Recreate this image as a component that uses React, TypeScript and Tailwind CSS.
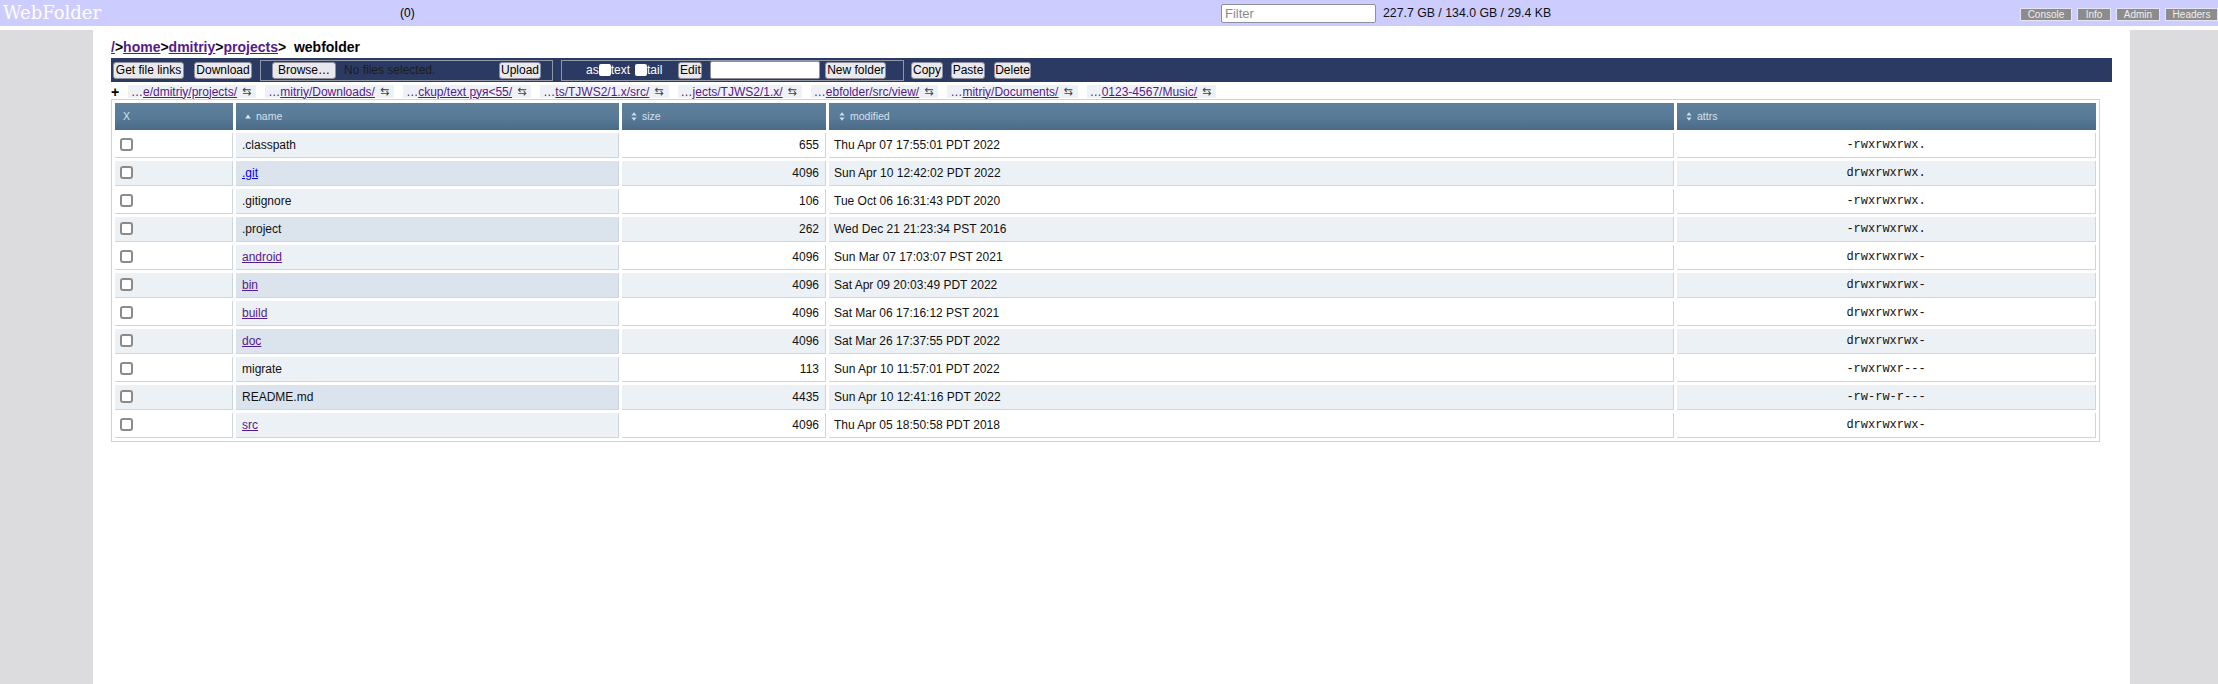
import React from "react";

type Row = { name: string; link?: string; size: string; modified: string; attrs: string };

const rows: Row[] = [
  { name: ".classpath", size: "655", modified: "Thu Apr 07 17:55:01 PDT 2022", attrs: "-rwxrwxrwx." },
  { name: ".git", link: "text-[#0000ee]", size: "4096", modified: "Sun Apr 10 12:42:02 PDT 2022", attrs: "drwxrwxrwx." },
  { name: ".gitignore", size: "106", modified: "Tue Oct 06 16:31:43 PDT 2020", attrs: "-rwxrwxrwx." },
  { name: ".project", size: "262", modified: "Wed Dec 21 21:23:34 PST 2016", attrs: "-rwxrwxrwx." },
  { name: "android", link: "text-[#551a8b]", size: "4096", modified: "Sun Mar 07 17:03:07 PST 2021", attrs: "drwxrwxrwx-" },
  { name: "bin", link: "text-[#551a8b]", size: "4096", modified: "Sat Apr 09 20:03:49 PDT 2022", attrs: "drwxrwxrwx-" },
  { name: "build", link: "text-[#551a8b]", size: "4096", modified: "Sat Mar 06 17:16:12 PST 2021", attrs: "drwxrwxrwx-" },
  { name: "doc", link: "text-[#551a8b]", size: "4096", modified: "Sat Mar 26 17:37:55 PDT 2022", attrs: "drwxrwxrwx-" },
  { name: "migrate", size: "113", modified: "Sun Apr 10 11:57:01 PDT 2022", attrs: "-rwxrwxr---" },
  { name: "README.md", size: "4435", modified: "Sun Apr 10 12:41:16 PDT 2022", attrs: "-rw-rw-r---" },
  { name: "src", link: "text-[#551a8b]", size: "4096", modified: "Thu Apr 05 18:50:58 PDT 2018", attrs: "drwxrwxrwx-" },
];

const recent = [
  "e/dmitriy/projects/",
  "mitriy/Downloads/",
  "ckup/text руя<55/",
  "ts/TJWS2/1.x/src/",
  "jects/TJWS2/1.x/",
  "ebfolder/src/view/",
  "mitriy/Documents/",
  "0123-4567/Music/",
];

const Btn = ({ label, w }: { label: string; w: string }) => (
  <button className={`${w} h-[17px] flex items-center justify-center bg-[#e9e9ed] border border-[#8f8f9d] rounded-[3px] text-[12px] leading-none text-black`}>
    {label}
  </button>
);

const TopBtn = ({ label, w }: { label: string; w: string }) => (
  <div className={`${w} h-[13px] flex items-center justify-center bg-[#8c8c8c] border border-[#e4e4f4] text-[10px] leading-none text-[#eeeeee]`}>
    {label}
  </div>
);

const SortUp = () => (
  <svg width="6" height="5" viewBox="0 0 6 5">
    <path d="M3 0.5L5.8 4.5H0.2Z" fill="#dfe7ef" />
  </svg>
);

const SortBoth = () => (
  <svg width="6" height="9" viewBox="0 0 6 9">
    <path d="M3 0.3L5.6 3.6H0.4Z M3 8.7L0.4 5.4H5.6Z" fill="#cfdbe6" />
  </svg>
);

const Box = () => <span className="block w-[13px] h-[13px] -mt-[1px] border-2 border-[#8b8b8b] rounded-[3px] bg-white" />;

const WebFolder: React.FC = () => {
  return (
    <div className="w-[2218px] h-[684px] overflow-hidden bg-white text-black font-['Liberation_Sans',Arial,sans-serif]">
      {/* top bar */}
      <div className="h-[26px] bg-[#ccccff] flex items-start">
        <div className="w-[400px] h-[26px] pl-[3px] flex items-center font-['DejaVu_Serif',serif] text-[18px] text-white leading-none">WebFolder</div>
        <div className="w-[20px] h-[26px] flex items-center text-[12px]">(0)</div>
        <input
          placeholder="Filter"
          className="ml-[801px] mt-[4px] w-[155px] h-[19px] px-[3px] bg-white border border-[#8f8f9d] rounded-[2px] text-[13px] placeholder:text-[#8a8a8a] outline-none"
        />
        <div className="ml-[7px] h-[26px] flex items-center text-[12.3px] text-[#111]">227.7 GB / 134.0 GB / 29.4 KB</div>
        <div className="ml-auto mt-[8px] flex gap-[5px]">
          <TopBtn label="Console" w="w-[52px]" />
          <TopBtn label="Info" w="w-[34px]" />
          <TopBtn label="Admin" w="w-[44px]" />
          <TopBtn label="Headers" w="w-[53px]" />
        </div>
      </div>
      <div className="h-[4px]" />

      <div className="flex h-[654px]">
        <div className="w-[93px] bg-[#dcdcde]" />
        <div className="flex-1 px-[18px]">
          {/* breadcrumb */}
          <div className="h-[28px] flex items-end pb-[3px] text-[14px] leading-[16px] font-bold">
            <a className="text-[#551a8b] underline">/</a>
            <span>&gt;</span>
            <a className="text-[#551a8b] underline">home</a>
            <span>&gt;</span>
            <a className="text-[#551a8b] underline">dmitriy</a>
            <span>&gt;</span>
            <a className="text-[#551a8b] underline">projects</a>
            <span className="whitespace-pre">&gt;  webfolder</span>
          </div>

          {/* toolbar */}
          <div className="h-[24px] bg-[#2b3a63] flex items-center pl-[2px] text-white text-[12px]">
            <Btn label="Get file links" w="w-[71px]" />
            <div className="ml-[10px]"><Btn label="Download" w="w-[58px]" /></div>
            <div className="ml-[8px] w-[293px] h-[21px] border border-[#9097a6] flex items-center pl-[11px]">
              <Btn label="Browse…" w="w-[64px]" />
              <span className="ml-[8px] w-[151px] text-[#1d1d1d]">No files selected.</span>
              <div className="ml-[4px]"><Btn label="Upload" w="w-[42px]" /></div>
            </div>
            <div className="ml-[8px] w-[343px] h-[21px] border border-[#9097a6] flex items-center pl-[24px]">
              <span>as</span>
              <span className="block w-[12px] h-[12px] bg-white rounded-[2px]" />
              <span>text</span>
              <span className="ml-[5px] block w-[12px] h-[12px] bg-white rounded-[2px]" />
              <span>tail</span>
              <div className="ml-[16px]"><Btn label="Edit" w="w-[24px]" /></div>
              <span className="ml-[8px] block w-[110px] h-[18px] bg-white border border-[#8f8f9d] rounded-[2px]" />
              <div className="ml-[5px]"><Btn label="New folder" w="w-[61px]" /></div>
            </div>
            <div className="ml-[7px]"><Btn label="Copy" w="w-[32px]" /></div>
            <div className="ml-[8px]"><Btn label="Paste" w="w-[34px]" /></div>
            <div className="ml-[9px]"><Btn label="Delete" w="w-[37px]" /></div>
          </div>

          {/* recent folders */}
          <div className="h-[17px] flex items-center pt-[2px]">
            <span className="w-[17px] font-bold text-[14px] leading-none">+</span>
            <div className="flex gap-[9px]">
              {recent.map((r) => (
                <div key={r} className="h-[13px] flex items-center bg-[#eef2f6] pl-[3px] pr-[5px] text-[12px] leading-none">
                  <span className="text-[#551a8b]">…</span>
                  <a className="text-[#551a8b] underline">{r}</a>
                  <span className="ml-[5px] text-[11px] text-[#444] font-['DejaVu_Sans',sans-serif]">⇆</span>
                </div>
              ))}
            </div>
          </div>

          {/* listing */}
          <table className="w-[1989px] table-fixed border-separate border-spacing-[3px] border border-[#c8d3de]">
            <colgroup>
              <col className="w-[118px]" />
              <col className="w-[383px]" />
              <col className="w-[204px]" />
              <col className="w-[845px]" />
              <col className="w-[419px]" />
            </colgroup>
            <thead>
              <tr className="text-[10.5px] text-[#d6e0e9] font-normal">
                <th className="h-[27px] p-0 text-left font-normal bg-[linear-gradient(to_bottom,#5d809c,#587a97_55%,#4a6b88)] pl-[8px]">X</th>
                <th className="h-[27px] p-0 text-left font-normal bg-[linear-gradient(to_bottom,#5d809c,#587a97_55%,#4a6b88)]">
                  <div className="flex items-center pl-[9px] gap-[5px]"><SortUp /><span>name</span></div>
                </th>
                <th className="h-[27px] p-0 text-left font-normal bg-[linear-gradient(to_bottom,#5d809c,#587a97_55%,#4a6b88)]">
                  <div className="flex items-center pl-[9px] gap-[5px]"><SortBoth /><span>size</span></div>
                </th>
                <th className="h-[27px] p-0 text-left font-normal bg-[linear-gradient(to_bottom,#5d809c,#587a97_55%,#4a6b88)]">
                  <div className="flex items-center pl-[10px] gap-[5px]"><SortBoth /><span>modified</span></div>
                </th>
                <th className="h-[27px] p-0 text-left font-normal bg-[linear-gradient(to_bottom,#5d809c,#587a97_55%,#4a6b88)]">
                  <div className="flex items-center pl-[9px] gap-[5px]"><SortBoth /><span>attrs</span></div>
                </th>
              </tr>
            </thead>
            <tbody className="text-[12px] text-[#111]">
              {rows.map((r, i) => {
                const odd = i % 2 === 1;
                const bg = odd ? "bg-[#ecf1f6]" : "bg-white";
                const nameBg = odd ? "bg-[#dbe4ed]" : "bg-[#ecf1f6]";
                const cell = "h-[25px] p-0 border-b border-r border-[#cbd6e1] align-middle";
                return (
                  <tr key={r.name}>
                    <td className={`${cell} ${bg} pl-[5px]`}><Box /></td>
                    <td className={`${cell} ${nameBg} pl-[6px]`}>
                      {r.link ? <a className={`${r.link} underline`}>{r.name}</a> : r.name}
                    </td>
                    <td className={`${cell} ${bg} text-right pr-[6px]`}>{r.size}</td>
                    <td className={`${cell} ${bg} pl-[5px]`}>{r.modified}</td>
                    <td className={`${cell} ${bg} text-center font-['Liberation_Mono',monospace]`}>{r.attrs}</td>
                  </tr>
                );
              })}
            </tbody>
          </table>
        </div>
        <div className="w-[88px] bg-[#dcdcde]" />
      </div>
    </div>
  );
};

const App: React.FC = () => {
  return <WebFolder />;
};

export default App;
